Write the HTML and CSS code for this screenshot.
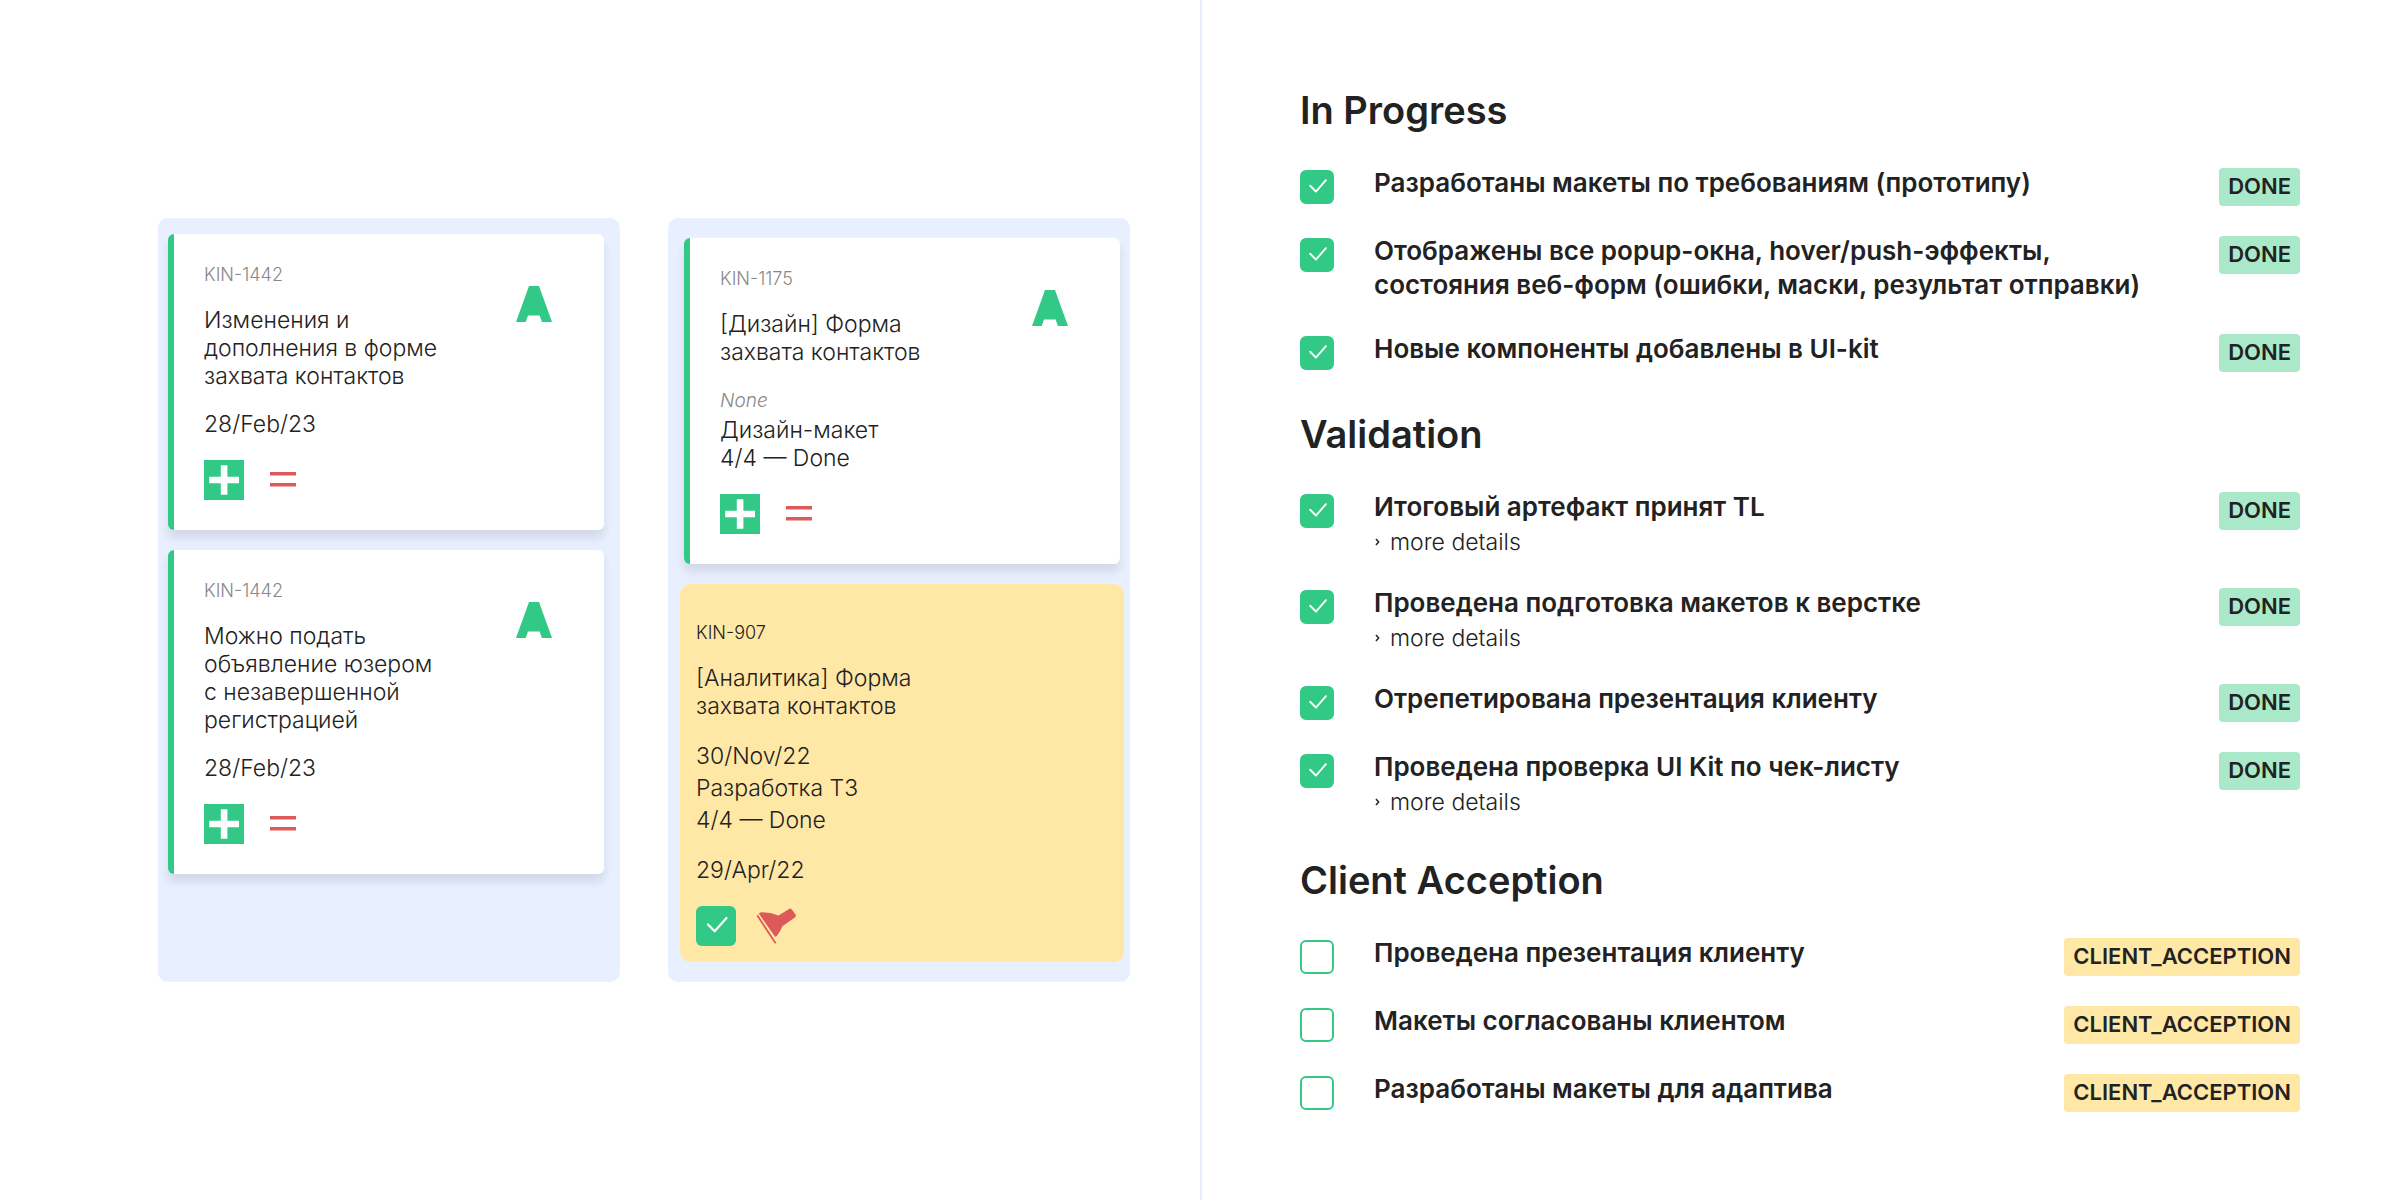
FILE: index.html
```html
<!DOCTYPE html>
<html lang="ru">
<head>
  <meta charset="UTF-8" />
  <meta name="viewport" content="width=device-width, initial-scale=1.0"/>
  <title>Kanban checklist</title>
  <link rel="stylesheet" href="styles.css">
</head>
<body>
  <!-- shared icons -->
  <svg class="sprite" aria-hidden="true">
    <symbol id="icon-priority" viewBox="0 0 36 36">
      <path d="M13 0h10l13 36H26l-2.400-6.500H12L9.700 36H0z" fill="#32c987"/>
    </symbol>
    <symbol id="icon-plus" viewBox="0 0 40 40">
      <path d="M0 0h40v40H0z" fill="#32c987"/>
      <path d="M16.800 5.200h6.600v11.500H35v6.600H23.400v11.500h-6.600V23.300H5.200v-6.600h11.600z" fill="#fff"/>
    </symbol>
    <symbol id="icon-equal" viewBox="0 0 26 40">
      <path d="M0 12h26v3.600H0zM0 23h26v3.600H0z" fill="#dd5a5a"/>
    </symbol>
    <symbol id="icon-check" viewBox="0 0 40 40">
      <path d="M12 18.500l6.700 6.800L30.500 12" fill="none" stroke="#fff" stroke-width="2.200" stroke-linecap="round" stroke-linejoin="round"/>
    </symbol>
    <symbol id="icon-flag" viewBox="0 0 40 40">
      <path d="M1.200 9.300L19.600 37.200" fill="none" stroke="#dd5a5a" stroke-width="1.800"/>
      <path d="M2.800 7.600Q3.600 6.300 5.400 6.200Q14 6 22.600 9.600L33 2.900Q34.600 2.100 35.700 3.300L39.500 8.500Q40.500 10 39.100 11.200L26.400 20.300Q24.400 25.500 21.200 29.600Q20 31.200 18.900 30.400Z" fill="#dd5a5a"/>
    </symbol>
    <symbol id="icon-chevron" viewBox="0 0 8 8">
      <path d="M2 1l2.600 3L2 7" fill="none" stroke="#222" stroke-width="1.500"/>
    </symbol>
  </svg>

  <main class="page">
    <section class="board">
      <div class="column">
        <article class="card">
          <div class="card-body">
            <p class="key">KIN-1442</p>
            <h3 class="title">Изменения и дополнения в форме захвата контактов</h3>
            <p class="line">28/Feb/23</p>
            <div class="icons">
              <svg class="icon"><use href="#icon-plus"/></svg>
              <svg class="icon icon-narrow"><use href="#icon-equal"/></svg>
            </div>
          </div>
          <svg class="priority"><use href="#icon-priority"/></svg>
        </article>

        <article class="card">
          <div class="card-body">
            <p class="key">KIN-1442</p>
            <h3 class="title">Можно подать объявление юзером с&nbsp;незавершенной регистрацией</h3>
            <p class="line">28/Feb/23</p>
            <div class="icons">
              <svg class="icon"><use href="#icon-plus"/></svg>
              <svg class="icon icon-narrow"><use href="#icon-equal"/></svg>
            </div>
          </div>
          <svg class="priority"><use href="#icon-priority"/></svg>
        </article>
      </div>

      <div class="column column-wide">
        <article class="card">
          <div class="card-body">
            <p class="key">KIN-1175</p>
            <h3 class="title">[Дизайн] Форма захвата контактов</h3>
            <div>
              <p class="none">None</p>
              <p class="line">Дизайн-макет</p>
              <p class="line">4/4 — Done</p>
            </div>
            <div class="icons">
              <svg class="icon"><use href="#icon-plus"/></svg>
              <svg class="icon icon-narrow"><use href="#icon-equal"/></svg>
            </div>
          </div>
          <svg class="priority"><use href="#icon-priority"/></svg>
        </article>

        <article class="card card-yellow">
          <div class="card-body">
            <p class="key">KIN-907</p>
            <h3 class="title">[Аналитика] Форма захвата контактов</h3>
            <div class="stages">
              <p>30/Nov/22</p>
              <p>Разработка ТЗ</p>
              <p>4/4 — Done</p>
            </div>
            <p class="line">29/Apr/22</p>
            <div class="icons icons-close">
              <svg class="icon icon-done"><use href="#icon-check"/></svg>
              <svg class="icon"><use href="#icon-flag"/></svg>
            </div>
          </div>
        </article>
      </div>
    </section>

    <section class="checklist">
      <h2>In Progress</h2>
      <ul class="list">
        <li class="item">
          <span class="check"><input type="checkbox" id="c1" checked><svg><use href="#icon-check"/></svg></span>
          <div class="item-text"><label for="c1">Разработаны макеты по требованиям (прототипу)</label></div>
          <span class="tag">DONE</span>
        </li>
        <li class="item">
          <span class="check"><input type="checkbox" id="c2" checked><svg><use href="#icon-check"/></svg></span>
          <div class="item-text"><label for="c2">Отображены все popup-окна, hover/push-эффекты, состояния веб-форм (ошибки, маски, результат отправки)</label></div>
          <span class="tag">DONE</span>
        </li>
        <li class="item">
          <span class="check"><input type="checkbox" id="c3" checked><svg><use href="#icon-check"/></svg></span>
          <div class="item-text"><label for="c3">Новые компоненты добавлены в UI-kit</label></div>
          <span class="tag">DONE</span>
        </li>
      </ul>

      <h2>Validation</h2>
      <ul class="list">
        <li class="item">
          <span class="check"><input type="checkbox" id="c4" checked><svg><use href="#icon-check"/></svg></span>
          <div class="item-text">
            <label for="c4">Итоговый артефакт принят TL</label>
            <a class="more" href="#"><svg><use href="#icon-chevron"/></svg>more details</a>
          </div>
          <span class="tag">DONE</span>
        </li>
        <li class="item">
          <span class="check"><input type="checkbox" id="c5" checked><svg><use href="#icon-check"/></svg></span>
          <div class="item-text">
            <label for="c5">Проведена подготовка макетов к верстке</label>
            <a class="more" href="#"><svg><use href="#icon-chevron"/></svg>more details</a>
          </div>
          <span class="tag">DONE</span>
        </li>
        <li class="item">
          <span class="check"><input type="checkbox" id="c6" checked><svg><use href="#icon-check"/></svg></span>
          <div class="item-text"><label for="c6">Отрепетирована презентация клиенту</label></div>
          <span class="tag">DONE</span>
        </li>
        <li class="item">
          <span class="check"><input type="checkbox" id="c7" checked><svg><use href="#icon-check"/></svg></span>
          <div class="item-text">
            <label for="c7">Проведена проверка UI Kit по чек-листу</label>
            <a class="more" href="#"><svg><use href="#icon-chevron"/></svg>more details</a>
          </div>
          <span class="tag">DONE</span>
        </li>
      </ul>

      <h2>Client Acception</h2>
      <ul class="list">
        <li class="item">
          <span class="check"><input type="checkbox" id="c8"></span>
          <div class="item-text"><label for="c8">Проведена презентация клиенту</label></div>
          <span class="tag tag-client">CLIENT_ACCEPTION</span>
        </li>
        <li class="item">
          <span class="check"><input type="checkbox" id="c9"></span>
          <div class="item-text"><label for="c9">Макеты согласованы клиентом</label></div>
          <span class="tag tag-client">CLIENT_ACCEPTION</span>
        </li>
        <li class="item">
          <span class="check"><input type="checkbox" id="c10"></span>
          <div class="item-text"><label for="c10">Разработаны макеты для адаптива</label></div>
          <span class="tag tag-client">CLIENT_ACCEPTION</span>
        </li>
      </ul>
    </section>
  </main>
</body>
</html>
```
FILE: styles.css
```css
* { box-sizing: border-box; }
body { margin: 0; background: #fff; color: #222; font-family: Inter, "Open Sans", sans-serif; }
h2, h3, p, ul { margin: 0; padding: 0; }
svg { display: block; }
.sprite { position: absolute; width: 0; height: 0; }

.page { display: grid; grid-template-columns: 1fr 1fr; min-height: 100vh; }

/* board */
.board { display: flex; align-self: center; gap: 48px; padding: 0 70px 0 158px; }
.column { flex: 1; display: flex; flex-direction: column; gap: 20px; padding: 16px 16px 20px 10px; background: #e8efff; border-radius: 10px; }
.column-wide { padding: 20px 10px 20px 16px; }

.card { display: flex; justify-content: space-between; padding: 30px 52px 30px 30px; background: #fff; border-left: 6px solid #32c987; border-radius: 6px; box-shadow: 0 8px 8px rgba(34, 34, 34, 0.1); font-size: 23px; font-weight: 300; line-height: 28px; }
.card-body { flex: 1; }
.key { margin-bottom: 20px; font-size: 18px; line-height: 22px; color: #888; }
.title { max-width: 260px; margin-bottom: 20px; font-size: 23px; font-weight: 300; }
.none { font-size: 19px; font-style: italic; line-height: 30px; color: #888; }
.icons { display: flex; gap: 26px; margin-top: 22px; }
.icons-close { gap: 20px; }
.icon { width: 40px; height: 40px; }
.icon-narrow { width: 26px; }
.icon-done { background: #32c987; border-radius: 6px; }
.priority { width: 36px; height: 36px; margin-top: 22px; }

.card-yellow { margin: 0 -4px; padding: 38px 16px 16px; background: #ffe8a6; border-left: 0; border-radius: 10px; box-shadow: none; }
.card-yellow .key { color: #222; }
.stages { margin-bottom: 20px; line-height: 32px; }

/* checklist */
.checklist { padding: 86px 100px 80px 98px; border-left: 2px solid #e5effb; }
h2 { margin-bottom: 34px; font-size: 38px; font-weight: 600; line-height: 48px; }
.list { display: grid; gap: 30px; margin-bottom: 38px; list-style: none; }
.list:last-child { margin-bottom: 0; }
.item { display: grid; grid-template-columns: 34px 1fr auto; column-gap: 40px; align-items: start; }
.item-text { max-width: 800px; margin-top: -2px; }
.item-text label { display: block; padding-bottom: 2px; font-size: 26px; font-weight: 600; line-height: 34px; }
.more { display: flex; align-items: center; gap: 8px; color: #222; font-size: 23px; font-weight: 300; line-height: 32px; text-decoration: none; }
.more svg { width: 8px; height: 8px; }

.check { display: grid; margin-top: 2px; }
.check input, .check svg { grid-area: 1 / 1; width: 34px; height: 34px; margin: 0; }
.check input { appearance: none; border: 2px solid #32c987; border-radius: 6px; }
.check input:checked { background: #32c987; }
.check svg { pointer-events: none; }

.tag { padding: 0 9px 2px; background: #a9e9ca; border-radius: 4px; font-size: 22px; font-weight: 600; line-height: 36px; }
.tag-client { background: #ffe8a6; }
```
